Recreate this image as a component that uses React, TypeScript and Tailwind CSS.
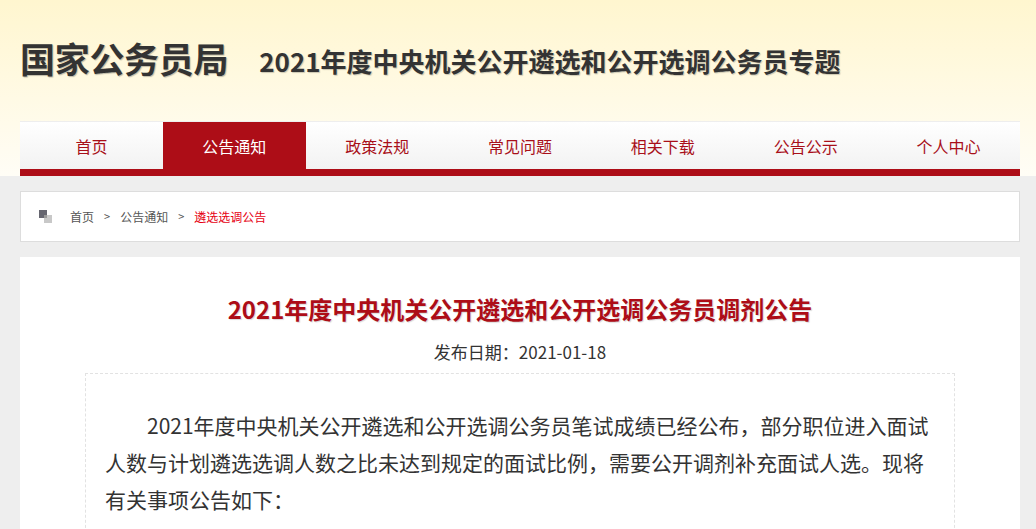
import React from 'react';

const NAV = ['首页', '公告通知', '政策法规', '常见问题', '相关下载', '公告公示', '个人中心'];

const YAHEI = "font-['Microsoft_YaHei','Noto_Sans_CJK_SC',sans-serif]";

export default function App() {
  return (
    <div className={`h-[529px] overflow-hidden bg-[#eeeeee] ${YAHEI}`}>
      {/* Header */}
      <header className="bg-gradient-to-b from-[#fff6cf] to-[#fffdf6]">
        <div className="w-[1000px] ml-[20px]">
          <div className="h-[121px] flex items-center gap-[31px] pb-[4px]">
            <h1 className="text-[35px] font-bold text-[#333] tracking-[-0.3px] [text-shadow:1px_1px_1px_rgba(0,0,0,0.25)]">
              国家公务员局
            </h1>
            <div className="text-[26px] font-bold text-[#333] pt-[4px] [text-shadow:1px_1px_1px_rgba(0,0,0,0.2)]">
              2021年度中央机关公开遴选和公开选调公务员专题
            </div>
          </div>
          <nav className="border-t border-[#eeeeee]">
            <ul className="grid grid-cols-7 h-[47px] bg-gradient-to-b from-white to-[#f2f2f2]">
              {NAV.map((n, i) => (
                <li
                  key={n}
                  className={
                    'flex items-center justify-center text-[16px] ' +
                    (i === 1 ? 'bg-[#ad0d17] text-white' : 'text-[#a80f19]')
                  }
                >
                  {n}
                </li>
              ))}
            </ul>
            <div className="h-[7px] bg-[#ad0d17]" />
          </nav>
        </div>
      </header>

      <div className="w-[1000px] ml-[20px] pt-[15px]">
        {/* Breadcrumb */}
        <div className="h-[51px] bg-white border border-[#dddddd] flex items-center pl-[18px] text-[12px] text-[#555]">
          <span className="relative w-[14px] h-[14px] mr-[17px] mt-[1px]">
            <span className="absolute left-0 top-0 w-[8px] h-[8px] bg-[#666670]" />
            <span className="absolute left-[5px] top-[5px] w-[8px] h-[8px] bg-[#c8c8c8]" />
            <span className="absolute left-[5px] top-[5px] w-[3px] h-[3px] bg-[#999]" />
          </span>
          <span>首页</span>
          <span className="mx-[10px] text-[11px]">&gt;</span>
          <span>公告通知</span>
          <span className="mx-[10px] text-[11px]">&gt;</span>
          <span className="text-[#e60012]">遴选选调公告</span>
        </div>

        {/* Content */}
        <div className="mt-[15px] bg-white pt-[36px] h-[300px]">
          <h2 className="text-center text-[24px] font-bold text-[#ad0d17] leading-[32px] [text-shadow:1px_1px_1px_rgba(0,0,0,0.15)]">
            2021年度中央机关公开遴选和公开选调公务员调剂公告
          </h2>
          <div className="text-center text-[17px] text-[#333] mt-[16px] leading-[22px]">
            发布日期：2021-01-18
          </div>
          <div className="mx-[65px] mt-[10px] border border-dashed border-[#e2e2e2] border-b-0 px-[19px] pt-[33px] pb-[20px]">
            <p className="text-[21px] leading-[37px] text-[#333] indent-[2em]">
              2021年度中央机关公开遴选和公开选调公务员笔试成绩已经公布，部分职位进入面试人数与计划遴选选调人数之比未达到规定的面试比例，需要公开调剂补充面试人选。现将有关事项公告如下：
            </p>
          </div>
        </div>
      </div>
    </div>
  );
}
